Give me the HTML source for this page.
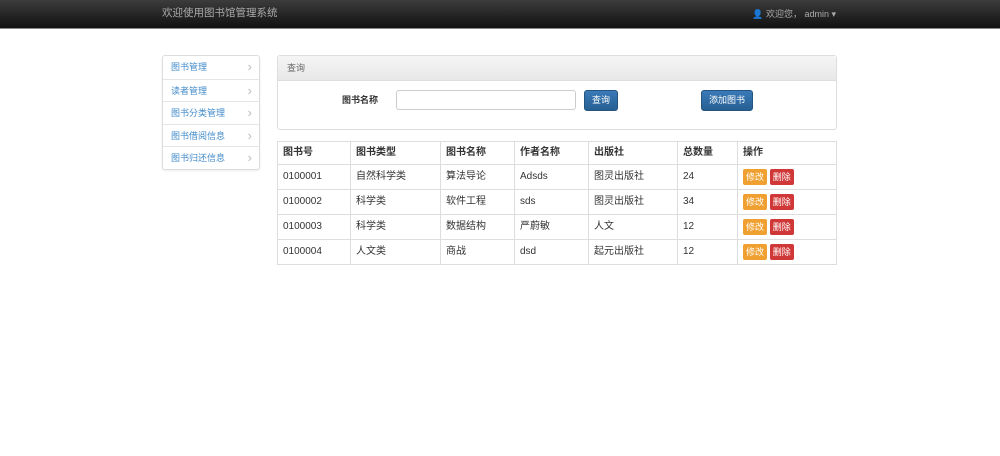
<!DOCTYPE html>
<html><head><meta charset="utf-8"><style>
*{box-sizing:border-box;margin:0;padding:0}
body{width:1000px;height:456px;background:#fff;font-family:"Liberation Sans","Noto Sans CJK SC",sans-serif;font-size:10px;color:#333;position:relative;overflow:hidden}
.nav{position:absolute;left:0;top:0;width:1000px;height:29px;background:linear-gradient(#3c3c3c,#111);border-bottom:1px solid #888}
.brand{position:absolute;left:162px;top:6px;color:#aaa;font-size:10.5px;line-height:14px}
.user{position:absolute;right:164px;top:8px;color:#aaa;font-size:9px;line-height:12px}
.side{position:absolute;left:162px;top:55px;width:98px;border:1px solid #ddd;border-radius:3px;box-shadow:0 1px 2px rgba(0,0,0,.08)}
.side div{height:22.6px;line-height:22px;padding-left:8px;color:#428bca;font-size:9px;border-top:1px solid #e5e5e5;position:relative}
.side div:first-child{border-top:none}
.side div:after{content:"›";position:absolute;right:7px;top:0;color:#bbb;font-size:13px}
.panel{position:absolute;left:277px;top:55px;width:560px;height:75px;border:1px solid #ddd;border-radius:3px}
.ph{height:25px;background:linear-gradient(#f5f5f5,#e8e8e8);border-bottom:1px solid #ddd;padding:0 9px;line-height:24px;color:#666;font-size:9px}
.lbl{position:absolute;left:64px;top:37px;font-weight:bold;font-size:9px;line-height:14px}
.inp{position:absolute;left:118px;top:34px;width:180px;height:20px;border:1px solid #ccc;border-radius:3px}
.btn{position:absolute;top:34px;height:21px;background:linear-gradient(#3a7ab8,#265f92);color:#fff;border-radius:3px;font-size:9px;line-height:19px;text-align:center;border:1px solid #245580}
table{position:absolute;left:277px;top:141px;width:560px;border-collapse:collapse;border:1px solid #ddd}
td,th{border:1px solid #ddd;height:25px;padding:0 5px;text-align:left;font-size:10px;font-weight:normal;line-height:12px;vertical-align:middle}
th{height:23px;font-weight:bold}
td span.t{display:inline-block;vertical-align:middle}
.b{display:inline-block;height:16px;line-height:16px;padding:0 3px;color:#fff;border-radius:2px;font-size:9px;vertical-align:middle}
.e{background:#f0a030}.d{background:#d03838}
</style></head><body>
<div class="nav"><div class="brand">欢迎使用图书馆管理系统</div><div class="user">&#128100; 欢迎您， admin ▾</div></div>
<div class="side"><div>图书管理</div><div>读者管理</div><div>图书分类管理</div><div>图书借阅信息</div><div>图书归还信息</div></div>
<div class="panel"><div class="ph">查询</div><div class="lbl">图书名称</div><div class="inp"></div>
<div class="btn" style="left:306px;width:34px">查询</div><div class="btn" style="left:423px;width:52px">添加图书</div></div>
<table>
<colgroup><col style="width:73px"><col style="width:90px"><col style="width:74px"><col style="width:74px"><col style="width:89px"><col style="width:60px"><col></colgroup>
<tr><th>图书号</th><th>图书类型</th><th>图书名称</th><th>作者名称</th><th>出版社</th><th>总数量</th><th>操作</th></tr>
<tr><td>0100001</td><td>自然科学类</td><td>算法导论</td><td>Adsds</td><td>图灵出版社</td><td>24</td><td><span class="b e">修改</span> <span class="b d">删除</span></td></tr>
<tr><td>0100002</td><td>科学类</td><td>软件工程</td><td>sds</td><td>图灵出版社</td><td>34</td><td><span class="b e">修改</span> <span class="b d">删除</span></td></tr>
<tr><td>0100003</td><td>科学类</td><td>数据结构</td><td>严蔚敏</td><td>人文</td><td>12</td><td><span class="b e">修改</span> <span class="b d">删除</span></td></tr>
<tr><td>0100004</td><td>人文类</td><td>商战</td><td>dsd</td><td>起元出版社</td><td>12</td><td><span class="b e">修改</span> <span class="b d">删除</span></td></tr>
</table>
</body></html>
